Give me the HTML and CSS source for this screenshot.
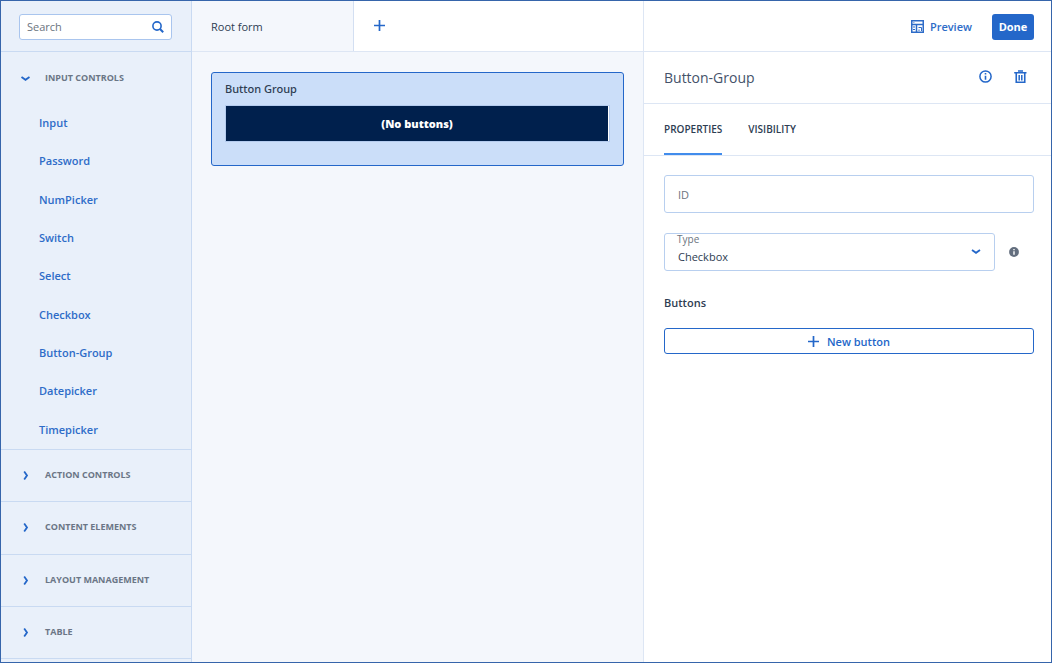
FILE: index.html
```html
<!DOCTYPE html>
<html lang="en">
<head>
<meta charset="utf-8">
<title>Form editor</title>
<link rel="stylesheet" href="styles.css">
</head>
<body>
<div class="editor">
  <aside class="sidebar">
    <div class="search-bar">
      <label class="search">
        <input class="search-input" type="search" placeholder="Search" aria-label="Search">
        <svg class="search-icon" width="12" height="12" viewBox="0 0 12 12" fill="none" stroke="currentColor" aria-hidden="true"><circle cx="5" cy="5" r="4.1" stroke-width="1.6"/><path d="M8 8l3.2 3.2" stroke-width="2"/></svg>
      </label>
    </div>
    <button class="section" type="button" aria-expanded="true">
      <svg class="chevron" width="10" height="10" viewBox="0 0 10 10" fill="none" stroke="currentColor" stroke-width="1.8" aria-hidden="true"><path d="M1.500 4L5.500 6.800L9.500 4"/></svg>
      <span>INPUT CONTROLS</span>
    </button>
    <nav class="controls">
      <a class="control" href="#">Input</a>
      <a class="control" href="#">Password</a>
      <a class="control" href="#">NumPicker</a>
      <a class="control" href="#">Switch</a>
      <a class="control" href="#">Select</a>
      <a class="control" href="#">Checkbox</a>
      <a class="control" href="#">Button-Group</a>
      <a class="control" href="#">Datepicker</a>
      <a class="control" href="#">Timepicker</a>
    </nav>
    <div class="sections">
      <button class="section" type="button" aria-expanded="false">
        <svg class="chevron" width="10" height="10" viewBox="0 0 10 10" fill="none" stroke="currentColor" stroke-width="1.800" aria-hidden="true"><path d="M4.200 1.500L7 5.500L4.200 9.500"/></svg>
        <span>ACTION CONTROLS</span>
      </button>
      <button class="section" type="button" aria-expanded="false">
        <svg class="chevron" width="10" height="10" viewBox="0 0 10 10" fill="none" stroke="currentColor" stroke-width="1.800" aria-hidden="true"><path d="M4.200 1.500L7 5.500L4.200 9.500"/></svg>
        <span>CONTENT ELEMENTS</span>
      </button>
      <button class="section" type="button" aria-expanded="false">
        <svg class="chevron" width="10" height="10" viewBox="0 0 10 10" fill="none" stroke="currentColor" stroke-width="1.800" aria-hidden="true"><path d="M4.200 1.500L7 5.500L4.200 9.500"/></svg>
        <span>LAYOUT MANAGEMENT</span>
      </button>
      <button class="section" type="button" aria-expanded="false">
        <svg class="chevron" width="10" height="10" viewBox="0 0 10 10" fill="none" stroke="currentColor" stroke-width="1.800" aria-hidden="true"><path d="M4.200 1.500L7 5.500L4.200 9.500"/></svg>
        <span>TABLE</span>
      </button>
    </div>
  </aside>

  <main class="canvas">
    <div class="form-tabs">
      <button class="form-tab" type="button">Root form</button>
      <button class="add-tab" type="button" aria-label="Add form">
        <svg width="12" height="12" viewBox="0 0 12 12" fill="none" stroke="currentColor" stroke-width="1.700" aria-hidden="true"><path d="M6.500 0v11M1 5.500h11"/></svg>
      </button>
    </div>
    <div class="stage">
      <section class="element">
        <h2 class="element-label">Button Group</h2>
        <div class="button-group"><div class="empty-group">(No buttons)</div></div>
      </section>
    </div>
  </main>

  <aside class="inspector">
    <div class="toolbar">
      <button class="preview" type="button">
        <svg width="13" height="13" viewBox="0 0 13 13" fill="none" stroke="currentColor" aria-hidden="true"><path d="M.75.75h11.500v11.500H.75zM.75 4.500h11.500M5.500 4.500v8" stroke-width="1.500"/><path d="M2.500 2.500h.8M2 7h2M2 9.500h2M7.500 7.500h3v3.500M8 9.500v1.500" stroke-width="1"/></svg>
        <span>Preview</span>
      </button>
      <button class="done" type="button">Done</button>
    </div>
    <div class="title-row">
      <h1 class="title">Button-Group</h1>
      <button class="icon-button" type="button" aria-label="Information">
        <svg width="14" height="14" viewBox="0 0 14 14" fill="none" stroke="currentColor" aria-hidden="true"><circle cx="7.500" cy="6.500" r="5.600" stroke-width="1.500"/><path d="M7.500 5.700v4M7.500 3v1.400" stroke-width="1.600"/></svg>
      </button>
      <button class="icon-button" type="button" aria-label="Delete">
        <svg width="14" height="14" viewBox="0 0 14 14" fill="none" stroke="currentColor" aria-hidden="true"><path d="M5 1h5M1.200 2.750h12.300" stroke-width="1.600"/><path d="M3.250 3v9.250h8.500V3" stroke-width="1.600"/><path d="M6.200 5v5.500M8.800 5v5.500" stroke-width="1.500"/></svg>
      </button>
    </div>
    <div class="tabs" role="tablist">
      <button class="tab tab-active" type="button" role="tab" aria-selected="true">PROPERTIES</button>
      <button class="tab" type="button" role="tab" aria-selected="false">VISIBILITY</button>
    </div>
    <form class="properties">
      <input class="field" type="text" placeholder="ID" aria-label="ID">
      <div class="type-row">
        <div class="select-box">
          <label class="select-label" for="type">Type</label>
          <select class="field select" id="type"><option>Checkbox</option></select>
          <svg class="select-arrow" width="10" height="10" viewBox="0 0 10 10" fill="none" stroke="currentColor" stroke-width="1.800" aria-hidden="true"><path d="M1 3L5 5.800L9 3"/></svg>
        </div>
        <svg class="hint" width="10" height="10" viewBox="0 0 10 10" role="img" aria-label="Help"><circle cx="5" cy="5" r="4.900" fill="currentColor"/><path d="M5 4.200v3.600M5 2v1.300" stroke="#fff" stroke-width="1.400"/></svg>
      </div>
      <h2 class="group-title">Buttons</h2>
      <button class="new-button" type="button">
        <svg width="12" height="12" viewBox="0 0 12 12" fill="none" stroke="currentColor" stroke-width="1.700" aria-hidden="true"><path d="M5.500 0v11M0 5.500h11"/></svg>
        <span>New button</span>
      </button>
    </form>
  </aside>
</div>
</body>
</html>
```
FILE: styles.css
```css
* { box-sizing: border-box; }

body {
  margin: 0;
  font: 11px/16px "Open Sans", "Noto Sans", sans-serif;
  color: #2e3d52;
}

button, input, select { font: inherit; color: inherit; }
button { margin: 0; padding: 0; border: 0; background: none; cursor: pointer; }
h1, h2 { margin: 0; font: inherit; }
svg { display: block; flex: none; }

.editor {
  display: grid;
  grid-template-columns: 191px minmax(0, 1fr) 408px;
  height: 100vh;
  border: 1px solid #3665ab;
  overflow: hidden;
}

/* Sidebar */
.sidebar {
  background: #e9f0fa;
  border-right: 1px solid #c9daf2;
  min-height: 0;
  overflow: hidden;
}
.search-bar {
  height: 51px;
  padding: 13px 19px 11px 18px;
  border-bottom: 1px solid #c9daf2;
}
.search {
  display: flex;
  align-items: center;
  height: 26px;
  padding: 0 7px;
  border: 1px solid #a9c5ee;
  border-radius: 3px;
  background: #fff;
}
.search-input {
  flex: 1;
  min-width: 0;
  padding: 0;
  border: 0;
  outline: 0;
  background: none;
  appearance: none;
}
.search-input::placeholder, .field::placeholder { color: #6b7480; opacity: 1; }
.search-icon, .chevron { color: #2467c9; }

.section {
  display: flex;
  align-items: center;
  gap: 15px;
  width: 100%;
  height: 52px;
  padding-left: 19px;
  font-size: 9px;
  font-weight: 700;
  color: #6b7686;
}
.controls {
  display: grid;
  grid-auto-rows: 1fr;
  height: 346px;
  border-bottom: 1px solid #c9daf2;
}
.control {
  display: flex;
  align-items: center;
  padding-left: 38px;
  color: #2e6cc8;
  font-weight: 600;
  text-decoration: none;
}
.sections { display: grid; grid-auto-rows: 1fr; height: 209px; }
.sections .section { height: auto; padding-bottom: 1px; border-bottom: 1px solid #c9daf2; }

/* Canvas */
.canvas { background: #f4f7fc; }
.form-tabs {
  display: flex;
  height: 51px;
  background: #fff;
  border-bottom: 1px solid #dde6f4;
}
.form-tab {
  width: 162px;
  padding: 2px 0 0 19px;
  text-align: left;
  background: #f4f7fc;
  border-right: 1px solid #d3dff2;
}
.add-tab { display: grid; place-items: center; width: 50px; color: #2467c9; }
.stage { padding: 20px 19px; }
.element {
  padding: 8px 13px 23px;
  border: 1px solid #2467c9;
  border-radius: 3px;
  background: #cbdef9;
}
.element-label {
  font-family: "Noto Sans", "Open Sans", sans-serif;
  font-weight: 500;
}
.button-group {
  margin-top: 8px;
  padding-right: 1px;
  border: 1px solid #b4cbee;
  background: #fff;
}
.empty-group {
  padding: 10px 0 9px;
  background: #00204d;
  color: #fff;
  font-weight: 800;
  text-align: center;
}

/* Inspector */
.inspector { border-left: 1px solid #dde6f4; background: #fff; }
.toolbar, .title-row, .tabs { display: flex; border-bottom: 1px solid #dde6f4; }
.toolbar {
  align-items: center;
  justify-content: flex-end;
  gap: 20px;
  height: 51px;
  padding: 1px 17px 0;
}
.preview { display: flex; align-items: center; gap: 6px; color: #2e6cc8; font-weight: 600; }
.done {
  width: 42px;
  height: 26px;
  border-radius: 3px;
  background: #2467c9;
  color: #fff;
  font-weight: 700;
}
.title-row { align-items: center; gap: 21px; height: 52px; padding: 0 24px 0 20px; }
.title { flex: 1; font-size: 14px; line-height: 20px; color: #45526a; }
.icon-button { padding-bottom: 2px; color: #2467c9; }
.tabs { gap: 26px; height: 52px; padding: 0 20px; }
.tab { font-size: 10px; font-weight: 600; border-bottom: 2px solid transparent; }
.tab-active { border-color: #418cec; }

.properties { padding: 19px 17px 20px 20px; }
.field {
  display: block;
  width: 100%;
  height: 38px;
  padding: 0 13px;
  border: 1px solid #b8cfef;
  border-radius: 3px;
  outline: 0;
  background: #fff;
}
.type-row { display: flex; align-items: center; gap: 14px; margin-top: 20px; padding-right: 15px; }
.select-box { position: relative; flex: 1; }
.select { appearance: none; padding-top: 10px; }
.select-label {
  position: absolute;
  top: 0;
  left: 13px;
  font-size: 10px;
  line-height: 13px;
  color: #6b7480;
}
.select-arrow { position: absolute; right: 14px; top: 14px; color: #2467c9; pointer-events: none; }
.hint { color: #636e7e; }
.group-title { margin-top: 24px; font-weight: 600; }
.new-button {
  display: flex;
  align-items: center;
  justify-content: center;
  gap: 7px;
  width: 100%;
  height: 26px;
  margin-top: 17px;
  padding-top: 1px;
  border: 1px solid #2467c9;
  border-radius: 3px;
  color: #2467c9;
  font-weight: 600;
}
```
